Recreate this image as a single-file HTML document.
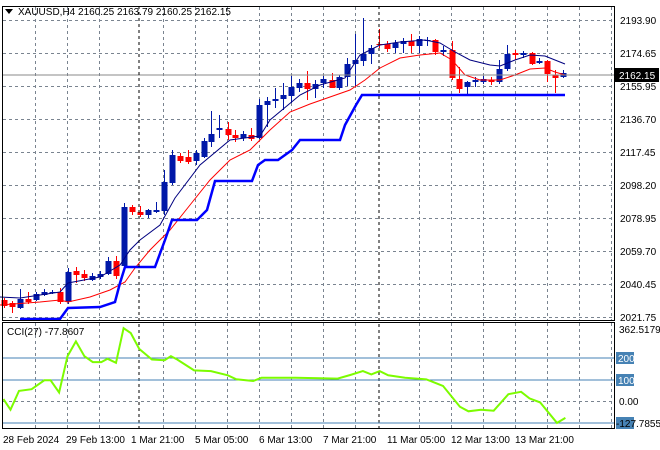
<!DOCTYPE html>
<html><head><meta charset="utf-8"><style>
html,body{margin:0;padding:0;background:#fff;}
svg{display:block;font-family:"Liberation Sans",sans-serif;font-size:10px;}
</style></head><body>
<svg id="s" width="660" height="450" viewBox="0 0 660 450" xmlns="http://www.w3.org/2000/svg">
<rect width="660" height="450" fill="#fff"/>
<g id="grid" stroke="#7a8490" stroke-width="1" stroke-dasharray="3,3" fill="none"></g>
<g id="cand"></g>
<polyline fill="none" stroke="#000080" stroke-width="1" points="0,297 20,298 60,292 68,283 100,277 120,265 130,250 140,240 160,225 175,198 200,165 230,140 260,136 270,120 300,95 320,85 345,78 360,55 380,45 400,42 425,40 440,43 455,52 470,60 490,65 500,66 515,60 530,55 545,56 560,62 565,64"/>
<polyline fill="none" stroke="#f00" stroke-width="1" points="0,305 40,302 60,300 68,302 90,297 110,290 125,282 135,268 150,250 170,230 190,205 210,180 230,160 250,150 270,130 290,112 310,104 330,97 350,90 365,80 380,68 400,58 420,55 440,53 452,60 465,75 480,80 500,80 515,75 530,69 545,68 555,72 565,75"/>
<polyline fill="none" stroke="#0000ff" stroke-width="2.5" points="20,319 60,319 68,308 100,307 115,302 120,283 125,267 155,267 165,240 172,220 197,220 207,210 215,181 252,181 258,165 265,160 278,160 292,150 300,140 340,140 345,125 356,105 362,95 565,95"/>
<line x1="2" y1="75" x2="614" y2="75" stroke="#8a8a8a" stroke-width="1"/>
<line x1="139" y1="6" x2="139" y2="428" stroke="#000" stroke-dasharray="3,3"/>
<line x1="379" y1="6" x2="379" y2="428" stroke="#000" stroke-dasharray="3,3"/>
<line x1="2" y1="358" x2="614" y2="358" stroke="#4682b4"/>
<line x1="2" y1="380" x2="614" y2="380" stroke="#4682b4"/>
<line x1="2" y1="423" x2="614" y2="423" stroke="#4682b4"/>
<polyline id="cci" fill="none" stroke="#7cfc00" stroke-width="2" points=""/>
<rect x="2.5" y="6.5" width="612" height="314" fill="none" stroke="#000"/>
<rect x="2.5" y="322.5" width="612" height="106" fill="none" stroke="#000"/>
<g fill="#000">
<path d="M5,9 L13,9 L9,14 Z"/>
<text x="18" y="15">XAUUSD,H4  2160.25 2163.79 2160.25 2162.15</text>
<text x="7" y="335">CCI(27) -77.8607</text>
<text x="620" y="24">2193.90</text>
<text x="620" y="57">2174.65</text>
<text x="620" y="90">2155.95</text>
<text x="620" y="123">2136.70</text>
<text x="620" y="156">2117.45</text>
<text x="620" y="189">2098.20</text>
<text x="620" y="222">2078.95</text>
<text x="620" y="255">2059.70</text>
<text x="620" y="288">2040.45</text>
<text x="620" y="321">2021.75</text>
<text x="619" y="333">362.5179</text>
<text x="619" y="405">0.00</text>
</g>
<rect x="615" y="68" width="44" height="14" fill="#000"/>
<text x="619" y="79" fill="#fff">2162.15</text>
<rect x="616" y="352" width="18" height="12" fill="#4682b4"/>
<text x="618" y="362" fill="#fff">200</text>
<rect x="616" y="374" width="18" height="12" fill="#4682b4"/>
<text x="618" y="384" fill="#fff">100</text>
<rect x="616" y="417" width="18" height="12" fill="#4682b4"/>
<text x="616" y="427" fill="#000">-127.7855</text>
<g fill="#000">
<text x="3" y="443">28 Feb 2024</text>
<text x="66" y="443">29 Feb 13:00</text>
<text x="131" y="443">1 Mar 21:00</text>
<text x="195" y="443">5 Mar 05:00</text>
<text x="259" y="443">6 Mar 13:00</text>
<text x="323" y="443">7 Mar 21:00</text>
<text x="387" y="443">11 Mar 05:00</text>
<text x="451" y="443">12 Mar 13:00</text>
<text x="515" y="443">13 Mar 21:00</text>
</g>
</svg>
<script>
var ns="http://www.w3.org/2000/svg";
function el(p,t,a){var e=document.createElementNS(ns,t);for(var k in a)e.setAttribute(k,a[k]);p.appendChild(e);return e;}
var g=document.getElementById('grid');
[20,53,86,119,152,185,218,251,284,317,401].forEach(function(y){el(g,'line',{x1:3,y1:y+.5,x2:614,y2:y+.5});});
for(var x=35;x<614;x+=32){if(x==131||x==387)continue;el(g,'line',{x1:x+.5,y1:7,x2:x+.5,y2:320});el(g,'line',{x1:x+.5,y1:323,x2:x+.5,y2:428});}
var C=[[4,300,306,'r',298,308],[12,303,307,'r',301,313],[20,299,308,'b',289,309],[28,299,302,'r',292,304],[36,294,300,'b',292,301],[44,292,295,'b',289,296],[52,292,293,'b',290,294],[60,292,302,'r',288,304],[68,272,302,'b',268,304],[76,271,275,'r',267,283],[84,274,278,'r',270,281],[92,276,280,'b',273,281],[100,274,277,'b',271,279],[108,261,274,'b',257,275],[116,261,276,'r',256,279],[124,207,266,'b',203,268],[132,207,212,'r',205,215],[140,212,215,'r',206,217],[148,210,215,'b',209,218],[156,210,212,'b',202,213],[164,182,211,'b',170,215],[172,155,183,'b',150,185],[180,156,161,'r',153,163],[188,157,162,'r',150,164],[196,153,161,'b',150,165],[204,141,157,'b',138,158],[211,134,142,'b',111,147],[219,128,130,'b',115,138],[228,129,135,'r',122,140],[235,135,138,'r',130,142],[243,134,138,'b',131,141],[251,135,139,'r',128,141],[259,105,138,'b',99,139],[267,101,105,'b',97,127],[275,99,101,'b',88,108],[283,95,99,'b',83,110],[291,87,96,'b',76,103],[299,83,88,'b',79,92],[307,83,89,'r',71,100],[315,84,89,'b',80,98],[323,79,83,'b',76,88],[332,80,88,'r',73,88],[339,77,88,'b',75,90],[347,64,77,'b',58,86],[355,60,64,'b',34,86],[363,54,61,'b',18,66],[371,48,54,'b',45,64],[379,44,45,'r',29,48],[387,44,49,'r',41,52],[395,43,48,'b',40,53],[403,41,44,'b',38,53],[411,41,46,'r',34,53],[419,39,46,'b',36,53],[427,40,41,'b',37,46],[435,40,52,'r',39,55],[443,50,52,'b',46,56],[452,50,78,'r',41,80],[459,79,89,'r',67,93],[467,82,87,'b',81,95],[475,80,82,'b',77,87],[483,79,82,'b',76,84],[491,80,82,'r',77,85],[499,69,82,'b',60,84],[507,54,69,'b',45,71],[515,53,55,'r',50,60],[523,53,55,'b',51,58],[532,53,64,'r',52,65],[539,61,63,'b',58,64],[547,61,74,'r',60,82],[555,75,78,'r',70,93],[563,73,77,'b',70,78]];
var cg=document.getElementById('cand');
C.forEach(function(c){var col=c[3]=='b'?'#0018a8':'#f00';
el(cg,'line',{x1:c[0]+.5,y1:c[4],x2:c[0]+.5,y2:c[5],stroke:col,'stroke-width':1});
var h=Math.max(1,c[2]-c[1]);el(cg,'rect',{x:c[0]-2.5,y:c[1],width:6,height:h,fill:col});});
var P=[[8,270],[25,302],[45,245],[75,240],[105,213],[120,213],[140,250],[160,140],[180,95],[200,140],[220,158],[240,158],[255,148],[275,160],[293,55],[310,70],[330,118],[360,150],[390,152],[405,140],[420,150],[460,183],[500,185],[540,198],[560,210],[600,215],[620,205],[700,205],[760,207],[800,208],[830,197],[860,185],[880,195],[900,185],[920,198],[960,205],[1010,210],[1050,230],[1090,293],[1110,307],[1140,302],[1170,305],[1205,255],[1235,248],[1255,268],[1280,280],[1320,342],[1340,327]];
document.getElementById('cci').setAttribute('points',P.map(function(p){return (p[0]/2.37).toFixed(1)+','+(310+p[1]/3.03).toFixed(1);}).join(' '));
</script>
</body></html>
